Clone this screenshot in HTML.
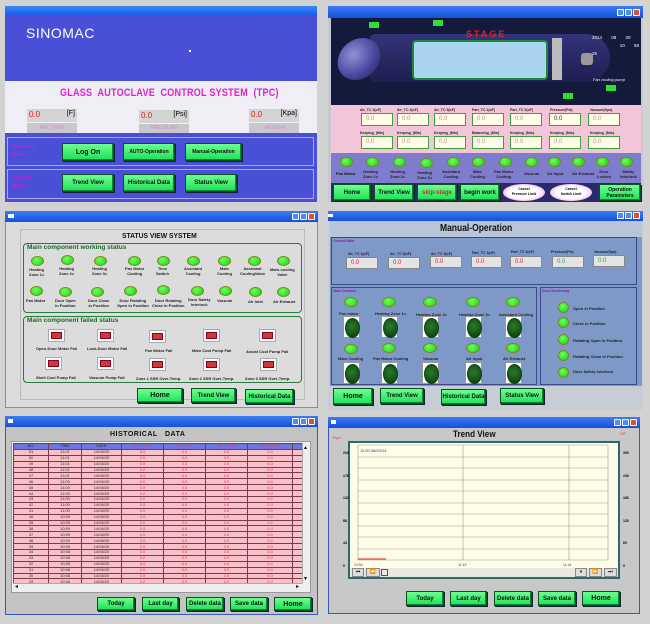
<!DOCTYPE html>
<html><head><meta charset="utf-8"><style>
*{margin:0;padding:0;box-sizing:border-box}
body{width:650px;height:624px;background:#d2d2d2;position:relative;overflow:hidden;font-family:"Liberation Sans",sans-serif}
.a{position:absolute}
.tb{position:absolute;height:10px;background:linear-gradient(#3b7cf5,#1650d8)}
.wb{position:absolute;top:2px;width:7px;height:7px;border:1px solid #fff;border-radius:1px;background:#4b8cf5}
.wx{background:#e0502a}
.btn{position:absolute;background:linear-gradient(#6dff8e,#1ee05a);border:1px solid #0c5020;box-shadow:1px 1px 0 #123,inset -1px -1px 0 #0a8a30;color:#111;font-weight:bold;font-size:6px;text-align:center;display:flex;align-items:center;justify-content:center;line-height:1;white-space:nowrap}
.lamp{position:absolute;width:13px;height:10px;border-radius:50%;background:radial-gradient(circle at 40% 35%,#6dff5a,#18d018);border:1px solid #7a8a10}
.lbl{position:absolute;font-size:4px;font-weight:bold;color:#222;text-align:center;line-height:5px;white-space:nowrap}
.rs{position:absolute;width:17px;height:13px;background:#fff;border:1px solid #aaa}
.rs:after{content:"";position:absolute;left:2px;top:2px;right:2px;bottom:2px;background:#d03838;border:1px solid #802}
.vb{position:absolute;height:13px;border:1px solid #3aa03a;background:#fffde8;font-size:6px;color:#c88;padding:2px 4px}
.fl{position:absolute;font-size:3.5px;font-weight:bold;color:#223;white-space:nowrap}
.knob{position:absolute;width:17px;height:22px;background:#fff;border:1px solid #999}
.knob:after{content:"";position:absolute;left:1px;top:1px;width:13px;height:18px;border-radius:50%;background:radial-gradient(circle at 45% 40%,#2a7a2a,#0a3a0a);border:1px solid #041}
table{border-collapse:collapse}
td{border:1px solid #7a3a4a;height:5.9px;font-size:4px;line-height:4px;text-align:center;color:#333;padding:0}
td.r{color:#e03a5a}
</style></head><body>

<!-- PANEL 1 -->
<div class="a" style="left:5px;top:6px;width:312px;height:196px;background:#4a4fd8"></div>
<div class="a" style="left:5px;top:6px;width:312px;height:9px;background:linear-gradient(#3a8af8,#1a5ae8)"></div>
<div class="a" style="left:26px;top:25px;color:#fff;font-size:14px;letter-spacing:0.5px">SINOMAC</div>
<div class="a" style="left:189px;top:50px;width:2px;height:2px;background:#fff"></div>
<div class="a" style="left:5px;top:81px;width:312px;height:52px;background:#eeeef4"></div>
<div class="a" style="left:60px;top:87px;width:220px;color:#e020d0;font-size:11px;font-weight:bold;white-space:nowrap;transform:scaleX(.82);transform-origin:0 0;letter-spacing:.3px">GLASS&nbsp; AUTOCLAVE&nbsp; CONTROL SYSTEM&nbsp; (TPC)</div>
<div class="a" style="left:27px;top:109px;width:50px;height:13px;background:#d4d4d4"><span class="a" style="left:2px;top:1px;color:#e02020;font-size:8px">0.0</span><span class="a" style="right:2px;top:1px;font-size:7px">[F]</span></div>
<div class="a" style="left:27px;top:123px;width:50px;height:10px;background:#c8c8cc;color:#e080d0;font-size:5px;text-align:center;line-height:10px">AIR_TEMP</div>
<div class="a" style="left:139px;top:110px;width:50px;height:13px;background:#d4d4d4"><span class="a" style="left:2px;top:1px;color:#e02020;font-size:8px">0.0</span><span class="a" style="right:2px;top:1px;font-size:7px">[Psi]</span></div>
<div class="a" style="left:139px;top:124px;width:50px;height:9px;background:#c8c8cc;color:#e080d0;font-size:5px;text-align:center;line-height:9px">PRESSURE</div>
<div class="a" style="left:249px;top:109px;width:50px;height:13px;background:#d4d4d4"><span class="a" style="left:2px;top:1px;color:#e02020;font-size:8px">0.0</span><span class="a" style="right:2px;top:1px;font-size:7px">[Kpa]</span></div>
<div class="a" style="left:249px;top:123px;width:50px;height:10px;background:#c8c8cc;color:#e080d0;font-size:5px;text-align:center;line-height:10px">VACUUM</div>
<div class="a" style="left:7px;top:137px;width:307px;height:29px;border:1px solid #a8a8f0"></div>
<div class="a" style="left:7px;top:169px;width:307px;height:30px;border:1px solid #a8a8f0"></div>
<div class="a" style="left:12px;top:143px;color:#d020d0;font-size:5.5px;line-height:8px">Operation<br>Items</div>
<div class="a" style="left:12px;top:174px;color:#d020d0;font-size:5.5px;line-height:8px">Viewing<br>Items</div>
<div class="btn" style="left:62px;top:143px;width:52px;height:18px;font-size:7px">Log On</div>
<div class="btn" style="left:123px;top:143px;width:52px;height:18px;font-size:5px">AUTO-Operation</div>
<div class="btn" style="left:185px;top:143px;width:57px;height:18px;font-size:5px">Manual-Operation</div>
<div class="btn" style="left:62px;top:174px;width:52px;height:18px;font-size:6px">Trend View</div>
<div class="btn" style="left:123px;top:174px;width:52px;height:18px;font-size:6px">Historical Data</div>
<div class="btn" style="left:185px;top:174px;width:52px;height:18px;font-size:6px">Status View</div>

<!-- PANEL 2 -->
<div class="a" style="left:328px;top:6px;width:315px;height:196px;background:#c8c8d0"></div>
<div class="tb" style="left:328px;top:6px;width:315px;height:12px"></div>
<div class="wb" style="left:617px;top:9px"></div><div class="wb" style="left:625px;top:9px"></div><div class="wb wx" style="left:633px;top:9px"></div>
<div class="a" style="left:331px;top:18px;width:310px;height:87px;background:#141a3c"></div>
<div class="a" style="left:370px;top:34px;width:240px;height:48px;border-radius:6px 30px 30px 6px;background:linear-gradient(#34347a,#1e1e50)"></div>
<div class="a" style="left:338px;top:38px;width:42px;height:42px;border-radius:50%;background:radial-gradient(circle at 35% 40%,#9090d8,#4a4aa0 55%,#1e1e58);transform:skewX(-10deg)"></div>
<div class="a" style="left:412px;top:40px;width:136px;height:40px;background:#a8d4f0;border:2px solid #1a8a3a;border-radius:4px"></div>
<div class="a" style="left:552px;top:38px;width:10px;height:42px;background:#bbb"></div>
<div class="a" style="left:581px;top:53px;width:12px;height:12px;background:#999;border-radius:3px"></div>
<div class="a" style="left:466px;top:29px;color:#e02020;font-size:9px;font-weight:bold;letter-spacing:2px">STAGE</div>
<div class="a" style="left:369px;top:22px;width:10px;height:6px;background:#30e030"></div>
<div class="a" style="left:433px;top:20px;width:10px;height:6px;background:#30e030"></div>
<div class="a" style="left:606px;top:85px;width:10px;height:6px;background:#30e030"></div>
<div class="a" style="left:563px;top:93px;width:10px;height:6px;background:#30e030"></div>
<div class="a" style="left:592px;top:34px;color:#fff;font-size:4.5px;line-height:8px;word-spacing:8px">2014 08 20<br>&nbsp;&nbsp;&nbsp;10 58 26</div>
<div class="a" style="left:593px;top:77px;color:#fff;font-size:4px;font-style:italic">Fan cooling pump</div>
<div class="a" style="left:331px;top:105px;width:310px;height:48px;background:#f4c4d8"></div>
<div class="fl" style="left:360px;top:108px">Air_TC 1(oF)</div><div class="fl" style="left:397px;top:108px">Air_TC 2(oF)</div><div class="fl" style="left:434px;top:108px">Air_TC 3(oF)</div><div class="fl" style="left:472px;top:108px">Part_TC 1(oF)</div><div class="fl" style="left:510px;top:108px">Part_TC 2(oF)</div><div class="fl" style="left:550px;top:108px">Pressure(Psi)</div><div class="fl" style="left:590px;top:108px">Vacuum(Kpa)</div>
<div class="vb" style="left:361px;top:113px;width:32px">0.0</div><div class="vb" style="left:397px;top:113px;width:32px">0.0</div><div class="vb" style="left:434px;top:113px;width:32px">0.0</div><div class="vb" style="left:472px;top:113px;width:32px">0.0</div><div class="vb" style="left:510px;top:113px;width:32px">0.0</div><div class="vb" style="left:549px;top:113px;width:32px;color:#333">0.0</div><div class="vb" style="left:588px;top:113px;width:32px">0.0</div>
<div class="fl" style="left:360px;top:131px">Keeping_(Min)</div><div class="fl" style="left:397px;top:131px">Keeping_(Min)</div><div class="fl" style="left:434px;top:131px">Keeping_(Min)</div><div class="fl" style="left:472px;top:131px">Balancing_(Min)</div><div class="fl" style="left:510px;top:131px">Keeping_(Min)</div><div class="fl" style="left:550px;top:131px">Keeping_(Min)</div><div class="fl" style="left:590px;top:131px">Keeping_(Min)</div>
<div class="vb" style="left:361px;top:136px;width:32px">0.0</div><div class="vb" style="left:397px;top:136px;width:32px">0.0</div><div class="vb" style="left:434px;top:136px;width:32px">0.0</div><div class="vb" style="left:472px;top:136px;width:32px">0.0</div><div class="vb" style="left:510px;top:136px;width:32px">0.0</div><div class="vb" style="left:549px;top:136px;width:32px">0.0</div><div class="vb" style="left:588px;top:136px;width:32px">0.0</div>
<div class="a" style="left:331px;top:153px;width:310px;height:30px;background:#7e7ccc"></div>
<div class="lamp" style="left:340px;top:157px"></div><div class="lamp" style="left:366px;top:157px"></div><div class="lamp" style="left:393px;top:157px"></div><div class="lamp" style="left:420px;top:158px"></div><div class="lamp" style="left:447px;top:157px"></div><div class="lamp" style="left:472px;top:157px"></div><div class="lamp" style="left:499px;top:157px"></div><div class="lamp" style="left:525px;top:157px"></div><div class="lamp" style="left:548px;top:157px"></div><div class="lamp" style="left:572px;top:157px"></div><div class="lamp" style="left:596px;top:157px"></div><div class="lamp" style="left:620px;top:157px"></div>
<div class="lbl" style="left:336px;top:171px;color:#111">Fan Motor</div><div class="lbl" style="left:363px;top:169px">Heating<br>Zone 1=</div><div class="lbl" style="left:390px;top:169px">Heating<br>Zone 2=</div><div class="lbl" style="left:417px;top:170px">Heating<br>Zone 3=</div><div class="lbl" style="left:442px;top:169px">Assistant<br>Cooling</div><div class="lbl" style="left:470px;top:169px">Main<br>Cooling</div><div class="lbl" style="left:494px;top:169px">Fan Motor<br>Cooling</div><div class="lbl" style="left:524px;top:171px">Vacuum</div><div class="lbl" style="left:547px;top:171px">Air Input</div><div class="lbl" style="left:572px;top:171px">Air Exhaust</div><div class="lbl" style="left:597px;top:169px">Door<br>Locked</div><div class="lbl" style="left:620px;top:169px">Safety<br>Interlock</div>
<div class="a" style="left:331px;top:183px;width:310px;height:19px;background:#2a2a6a"></div>
<div class="btn" style="left:333px;top:184px;width:38px;height:17px">Home</div>
<div class="btn" style="left:374px;top:184px;width:40px;height:17px">Trend View</div>
<div class="btn" style="left:417px;top:184px;width:40px;height:17px;color:#e02020">skip-stage</div>
<div class="btn" style="left:460px;top:184px;width:40px;height:17px">begin work</div>
<div class="a" style="left:503px;top:184px;width:42px;height:17px;border-radius:50%;background:radial-gradient(#fff 50%,#e070e0);font-size:3.5px;font-weight:bold;text-align:center;line-height:5px;padding-top:3px">Cancel<br>Pressure Limit</div>
<div class="a" style="left:550px;top:184px;width:42px;height:17px;border-radius:50%;background:radial-gradient(#fff 50%,#e070e0);font-size:3.5px;font-weight:bold;text-align:center;line-height:5px;padding-top:3px">Cancel<br>Switch Limit</div>
<div class="btn" style="left:599px;top:184px;width:42px;height:17px;font-size:5px;line-height:6px;white-space:normal">Operation<br>Parameters</div>

<!-- PANEL 3 -->
<div class="a" style="left:5px;top:212px;width:313px;height:196px;background:#dcdcdc;border:1px solid #8a8ab0"></div>
<div class="tb" style="left:5px;top:211px;width:313px;height:11px"></div>
<div class="a" style="left:8px;top:214px;width:6px;height:4px;background:#fff"></div>
<div class="wb" style="left:292px;top:213px"></div><div class="wb" style="left:300px;top:213px"></div><div class="wb wx" style="left:308px;top:213px"></div>
<div class="a" style="left:20px;top:229px;width:285px;height:171px;border:1px solid #bbb"></div>
<div class="a" style="left:122px;top:231px;font-size:7.5px;font-weight:bold;color:#111;transform:scaleX(.9);transform-origin:0 0">STATUS VIEW SYSTEM</div>
<div class="a" style="left:23px;top:243px;width:279px;height:70px;border:1.5px solid #2a7a3a;border-radius:4px"></div>
<div class="a" style="left:27px;top:244px;font-size:6.5px;font-weight:bold;color:#1a6a2a">Main component working status</div>
<div class="lamp" style="left:31px;top:256px"></div><div class="lamp" style="left:61px;top:255px"></div><div class="lamp" style="left:94px;top:256px"></div><div class="lamp" style="left:128px;top:256px"></div><div class="lamp" style="left:157px;top:256px"></div><div class="lamp" style="left:187px;top:256px"></div><div class="lamp" style="left:218px;top:256px"></div><div class="lamp" style="left:248px;top:256px"></div><div class="lamp" style="left:277px;top:256px"></div>
<div class="lbl" style="left:29px;top:267px">Heating<br>Zone 1=</div><div class="lbl" style="left:59px;top:266px">Heating<br>Zone 2=</div><div class="lbl" style="left:92px;top:266px">Heating<br>Zone 3=</div><div class="lbl" style="left:125px;top:266px">Fan Motor<br>Cooling</div><div class="lbl" style="left:156px;top:266px">Time<br>Switch</div><div class="lbl" style="left:184px;top:266px">Assistant<br>Cooling</div><div class="lbl" style="left:217px;top:266px">Main<br>Cooling</div><div class="lbl" style="left:240px;top:266px">Assistant<br>CoolingValve</div><div class="lbl" style="left:270px;top:267px">Main-cooling<br>Valve</div>
<div class="lamp" style="left:30px;top:286px"></div><div class="lamp" style="left:59px;top:287px"></div><div class="lamp" style="left:91px;top:287px"></div><div class="lamp" style="left:124px;top:286px"></div><div class="lamp" style="left:157px;top:285px"></div><div class="lamp" style="left:191px;top:286px"></div><div class="lamp" style="left:219px;top:286px"></div><div class="lamp" style="left:249px;top:287px"></div><div class="lamp" style="left:277px;top:287px"></div>
<div class="lbl" style="left:26px;top:298px">Fan Motor</div><div class="lbl" style="left:55px;top:298px">Door Open<br>in Position</div><div class="lbl" style="left:88px;top:298px">Door Close<br>in Position</div><div class="lbl" style="left:117px;top:298px">Door Rotating<br>Open in Position</div><div class="lbl" style="left:152px;top:298px">Door Rotating<br>Close in Position</div><div class="lbl" style="left:188px;top:297px">Door Safety<br>Interlock</div><div class="lbl" style="left:217px;top:298px">Vacuum</div><div class="lbl" style="left:248px;top:299px">Air Inlet</div><div class="lbl" style="left:273px;top:299px">Air Exhaust</div>
<div class="a" style="left:23px;top:316px;width:279px;height:67px;border:1.5px solid #2a7a3a;border-radius:4px"></div>
<div class="a" style="left:27px;top:317px;font-size:6.5px;font-weight:bold;color:#1a6a2a">Main component failed status</div>
<div class="rs" style="left:48px;top:329px"></div><div class="rs" style="left:97px;top:329px"></div><div class="rs" style="left:149px;top:330px"></div><div class="rs" style="left:203px;top:329px"></div><div class="rs" style="left:259px;top:329px"></div>
<div class="lbl" style="left:36px;top:346px">Open-Door Motor Fail</div><div class="lbl" style="left:87px;top:346px">Lock-Door Motor Fail</div><div class="lbl" style="left:145px;top:348px">Fan Motor Fail</div><div class="lbl" style="left:192px;top:348px">Main Cool Pump Fail</div><div class="lbl" style="left:246px;top:349px">Assist Cool Pump Fail</div>
<div class="rs" style="left:45px;top:357px"></div><div class="rs" style="left:97px;top:357px"></div><div class="rs" style="left:149px;top:358px"></div><div class="rs" style="left:203px;top:358px"></div><div class="rs" style="left:260px;top:358px"></div>
<div class="lbl" style="left:36px;top:375px">Shell Cool Pump Fail</div><div class="lbl" style="left:89px;top:375px">Vacuum Pump Fail</div><div class="lbl" style="left:136px;top:376px">Zone 1 SSR Over-Temp.</div><div class="lbl" style="left:189px;top:376px">Zone 2 SSR Over-Temp.</div><div class="lbl" style="left:245px;top:376px">Zone 3 SSR Over-Temp.</div>
<div class="btn" style="left:137px;top:388px;width:46px;height:15px;font-size:7px">Home</div>
<div class="btn" style="left:191px;top:388px;width:45px;height:15px">Trend View</div>
<div class="btn" style="left:245px;top:389px;width:49px;height:15px">Historical Data</div>

<!-- PANEL 4 -->
<div class="a" style="left:328px;top:211px;width:315px;height:199px;background:#c8ccd4"></div>
<div class="tb" style="left:328px;top:211px;width:315px;height:10px"></div>
<div class="a" style="left:328px;top:214px;width:5px;height:3px;background:#fff"></div>
<div class="wb" style="left:617px;top:212px"></div><div class="wb" style="left:625px;top:212px"></div><div class="wb wx" style="left:633px;top:212px"></div>
<div class="a" style="left:330px;top:221px;width:312px;height:185px;background:#7e98c8"></div>
<div class="a" style="left:330px;top:221px;width:312px;height:16px;background:#b8c4d8"></div>
<div class="a" style="left:440px;top:223px;font-size:10px;font-weight:bold;color:#111;transform:scaleX(.85);transform-origin:0 0;white-space:nowrap">Manual-Operation</div>
<div class="a" style="left:331px;top:237px;width:306px;height:48px;border:1px solid #3a4a8a;background:#7e98c8"></div>
<div class="a" style="left:333px;top:239px;font-size:3.5px;font-weight:bold;color:#a010a0">Current Data</div>
<div class="fl" style="left:348px;top:252px">Air_TC 1(oF)</div><div class="fl" style="left:390px;top:252px">Air_TC 2(oF)</div><div class="fl" style="left:431px;top:252px">Air_TC 3(oF)</div><div class="fl" style="left:472px;top:251px">Part_TC 1(oF)</div><div class="fl" style="left:511px;top:250px">Part_TC 2(oF)</div><div class="fl" style="left:551px;top:250px">Pressure(Psi)</div><div class="fl" style="left:594px;top:250px">Vacuum(Kpa)</div>
<div class="a" style="left:346px;top:257px;width:32px;height:12px;background:#e4e4e4;border:1px solid #888;color:#e02020;font-size:6px;padding:2px 4px">0.0</div>
<div class="a" style="left:388px;top:257px;width:32px;height:12px;background:#e4e4e4;border:1px solid #888;color:#e02020;font-size:6px;padding:2px 4px">0.0</div>
<div class="a" style="left:430px;top:256px;width:32px;height:12px;background:#e4e4e4;border:1px solid #888;color:#e02020;font-size:6px;padding:2px 4px">0.0</div>
<div class="a" style="left:471px;top:256px;width:31px;height:12px;background:#e4e4e4;border:1px solid #888;color:#e02020;font-size:6px;padding:2px 4px">0.0</div>
<div class="a" style="left:510px;top:256px;width:32px;height:12px;background:#e4e4e4;border:1px solid #888;color:#e02020;font-size:6px;padding:2px 4px">0.0</div>
<div class="a" style="left:552px;top:256px;width:32px;height:12px;background:#e4e4e4;border:1px solid #888;color:#3a9a6a;font-size:6px;padding:2px 4px">0.0</div>
<div class="a" style="left:593px;top:255px;width:32px;height:12px;background:#e4e4e4;border:1px solid #888;color:#3a9a6a;font-size:6px;padding:2px 4px">0.0</div>
<div class="a" style="left:331px;top:287px;width:206px;height:98px;border:1px solid #3a4a8a"></div>
<div class="a" style="left:540px;top:287px;width:97px;height:98px;border:1px solid #3a4a8a"></div>
<div class="a" style="left:333px;top:289px;font-size:3.5px;font-weight:bold;color:#a010a0">Main Controls</div>
<div class="a" style="left:542px;top:289px;font-size:3.5px;font-weight:bold;color:#a010a0">Door Monitoring</div>
<div class="lamp" style="left:344px;top:297px;width:14px"></div><div class="lamp" style="left:382px;top:297px;width:14px"></div><div class="lamp" style="left:423px;top:297px;width:14px"></div><div class="lamp" style="left:466px;top:297px;width:14px"></div><div class="lamp" style="left:506px;top:297px;width:14px"></div>
<div class="lbl" style="left:339px;top:311px">Fan motor</div><div class="lbl" style="left:375px;top:311px">Heating Zone 1=</div><div class="lbl" style="left:416px;top:312px">Heating Zone 2=</div><div class="lbl" style="left:459px;top:312px">Heating Zone 3=</div><div class="lbl" style="left:499px;top:312px">Assistant Cooling</div>
<div class="knob" style="left:343px;top:316px"></div><div class="knob" style="left:381px;top:316px"></div><div class="knob" style="left:422px;top:316px"></div><div class="knob" style="left:465px;top:316px"></div><div class="knob" style="left:505px;top:316px"></div>
<div class="lamp" style="left:344px;top:344px;width:14px"></div><div class="lamp" style="left:382px;top:343px;width:14px"></div><div class="lamp" style="left:423px;top:343px;width:14px"></div><div class="lamp" style="left:466px;top:343px;width:14px"></div><div class="lamp" style="left:506px;top:343px;width:14px"></div>
<div class="lbl" style="left:338px;top:356px">Main Cooling</div><div class="lbl" style="left:373px;top:356px">Fan Motor Cooling</div><div class="lbl" style="left:423px;top:356px">Vacuum</div><div class="lbl" style="left:466px;top:356px">Air Input</div><div class="lbl" style="left:503px;top:356px">Air Exhaust</div>
<div class="knob" style="left:343px;top:362px"></div><div class="knob" style="left:381px;top:362px"></div><div class="knob" style="left:422px;top:362px"></div><div class="knob" style="left:465px;top:362px"></div><div class="knob" style="left:505px;top:362px"></div>
<div class="lamp" style="left:558px;top:302px;width:11px;height:11px"></div><div class="lamp" style="left:558px;top:317px;width:11px;height:11px"></div><div class="lamp" style="left:558px;top:334px;width:11px;height:11px"></div><div class="lamp" style="left:558px;top:350px;width:11px;height:11px"></div><div class="lamp" style="left:558px;top:367px;width:11px;height:11px"></div>
<div class="lbl" style="left:573px;top:306px">Open in Position</div><div class="lbl" style="left:573px;top:321px">Close in Position</div><div class="lbl" style="left:573px;top:338px">Rotating Open in Position</div><div class="lbl" style="left:573px;top:354px">Rotating Close in Position</div><div class="lbl" style="left:573px;top:369px">Door Safety Interlock</div>
<div class="a" style="left:330px;top:386px;width:312px;height:20px;background:#c8ccd4"></div>
<div class="btn" style="left:333px;top:388px;width:40px;height:17px;font-size:7px">Home</div>
<div class="btn" style="left:380px;top:388px;width:44px;height:16px">Trend View</div>
<div class="btn" style="left:441px;top:389px;width:45px;height:16px">Historical Data</div>
<div class="btn" style="left:500px;top:388px;width:44px;height:16px">Status View</div>

<!-- PANEL 5 -->
<div class="a" style="left:5px;top:417px;width:313px;height:198px;background:#c4c4c4;border:1px solid #3a5ab8"></div>
<div class="tb" style="left:5px;top:416px;width:313px;height:11px"></div>
<div class="a" style="left:8px;top:419px;width:5px;height:4px;background:#fff"></div>
<div class="wb" style="left:292px;top:418px"></div><div class="wb" style="left:300px;top:418px"></div><div class="wb wx" style="left:308px;top:418px"></div>
<div class="a" style="left:110px;top:431px;font-size:7px;font-weight:bold;color:#111;letter-spacing:.5px">HISTORICAL&nbsp;&nbsp; DATA</div>
<div class="a" style="left:11px;top:441px;width:300px;height:152px;background:#f0f0f0;border:1px solid #999"></div>
<div class="a" style="left:13px;top:443px;width:289px;height:140px;overflow:hidden;background:#f8c0c8">
<table style="width:305px">
<tr style="background:#6c78e0"><td style="width:35px;color:#223">NO.</td><td style="width:33px;color:#223">TIME</td><td style="width:40px;color:#223">DATE</td><td class="r" style="width:42px">Air_TC 1F</td><td class="r" style="width:42px">Air_TC 2F</td><td class="r" style="width:42px">Air_TC 3F</td><td class="r" style="width:45px">Part_TC 1F</td><td class="r">PR</td></tr>
<tr><td>51</td><td>11:01</td><td>14/08/20</td><td class="r">0.0</td><td class="r">0.0</td><td class="r">0.0</td><td class="r">0.0</td><td class="r">0.0</td></tr>
<tr><td>50</td><td>11:01</td><td>14/08/20</td><td class="r">0.0</td><td class="r">0.0</td><td class="r">0.0</td><td class="r">0.0</td><td class="r">0.0</td></tr>
<tr><td>49</td><td>11:01</td><td>14/08/20</td><td class="r">0.0</td><td class="r">0.0</td><td class="r">0.0</td><td class="r">0.0</td><td class="r">0.0</td></tr>
<tr><td>48</td><td>11:01</td><td>14/08/20</td><td class="r">0.0</td><td class="r">0.0</td><td class="r">0.0</td><td class="r">0.0</td><td class="r">0.0</td></tr>
<tr><td>47</td><td>11:01</td><td>14/08/20</td><td class="r">0.0</td><td class="r">0.0</td><td class="r">0.0</td><td class="r">0.0</td><td class="r">0.0</td></tr>
<tr><td>46</td><td>11:00</td><td>14/08/20</td><td class="r">0.0</td><td class="r">0.0</td><td class="r">0.0</td><td class="r">0.0</td><td class="r">0.0</td></tr>
<tr><td>45</td><td>11:00</td><td>14/08/20</td><td class="r">0.0</td><td class="r">0.0</td><td class="r">0.0</td><td class="r">0.0</td><td class="r">0.0</td></tr>
<tr><td>44</td><td>11:00</td><td>14/08/20</td><td class="r">0.0</td><td class="r">0.0</td><td class="r">0.0</td><td class="r">0.0</td><td class="r">0.0</td></tr>
<tr><td>43</td><td>11:00</td><td>14/08/20</td><td class="r">0.0</td><td class="r">0.0</td><td class="r">0.0</td><td class="r">0.0</td><td class="r">0.0</td></tr>
<tr><td>42</td><td>11:00</td><td>14/08/20</td><td class="r">0.0</td><td class="r">0.0</td><td class="r">0.0</td><td class="r">0.0</td><td class="r">0.0</td></tr>
<tr><td>41</td><td>11:00</td><td>14/08/20</td><td class="r">0.0</td><td class="r">0.0</td><td class="r">0.0</td><td class="r">0.0</td><td class="r">0.0</td></tr>
<tr><td>40</td><td>10:59</td><td>14/08/20</td><td class="r">0.0</td><td class="r">0.0</td><td class="r">0.0</td><td class="r">0.0</td><td class="r">0.0</td></tr>
<tr><td>39</td><td>10:59</td><td>14/08/20</td><td class="r">0.0</td><td class="r">0.0</td><td class="r">0.0</td><td class="r">0.0</td><td class="r">0.0</td></tr>
<tr><td>38</td><td>10:59</td><td>14/08/20</td><td class="r">0.0</td><td class="r">0.0</td><td class="r">0.0</td><td class="r">0.0</td><td class="r">0.0</td></tr>
<tr><td>37</td><td>10:59</td><td>14/08/20</td><td class="r">0.0</td><td class="r">0.0</td><td class="r">0.0</td><td class="r">0.0</td><td class="r">0.0</td></tr>
<tr><td>36</td><td>10:59</td><td>14/08/20</td><td class="r">0.0</td><td class="r">0.0</td><td class="r">0.0</td><td class="r">0.0</td><td class="r">0.0</td></tr>
<tr><td>35</td><td>10:59</td><td>14/08/20</td><td class="r">0.0</td><td class="r">0.0</td><td class="r">0.0</td><td class="r">0.0</td><td class="r">0.0</td></tr>
<tr><td>34</td><td>10:58</td><td>14/08/20</td><td class="r">0.0</td><td class="r">0.0</td><td class="r">0.0</td><td class="r">0.0</td><td class="r">0.0</td></tr>
<tr><td>33</td><td>10:58</td><td>14/08/20</td><td class="r">0.0</td><td class="r">0.0</td><td class="r">0.0</td><td class="r">0.0</td><td class="r">0.0</td></tr>
<tr><td>32</td><td>10:58</td><td>14/08/20</td><td class="r">0.0</td><td class="r">0.0</td><td class="r">0.0</td><td class="r">0.0</td><td class="r">0.0</td></tr>
<tr><td>31</td><td>10:58</td><td>14/08/20</td><td class="r">0.0</td><td class="r">0.0</td><td class="r">0.0</td><td class="r">0.0</td><td class="r">0.0</td></tr>
<tr><td>30</td><td>10:58</td><td>14/08/20</td><td class="r">0.0</td><td class="r">0.0</td><td class="r">0.0</td><td class="r">0.0</td><td class="r">0.0</td></tr>
<tr><td>29</td><td>10:58</td><td>14/08/20</td><td class="r">0.0</td><td class="r">0.0</td><td class="r">0.0</td><td class="r">0.0</td><td class="r">0.0</td></tr>
</table></div>
<div class="a" style="left:302px;top:443px;width:8px;height:140px;background:#eee;border-left:1px solid #aaa"></div>
<div class="a" style="left:303px;top:445px;font-size:5px">▲</div><div class="a" style="left:303px;top:576px;font-size:5px">▼</div>
<div class="a" style="left:13px;top:583px;width:289px;height:8px;background:#eee;border-top:1px solid #aaa"></div>
<div class="a" style="left:15px;top:583px;font-size:6px">◂</div><div class="a" style="left:296px;top:583px;font-size:6px">▸</div>
<div class="btn" style="left:97px;top:597px;width:38px;height:14px">Today</div>
<div class="btn" style="left:142px;top:597px;width:37px;height:14px">Last day</div>
<div class="btn" style="left:186px;top:597px;width:38px;height:14px">Delete data</div>
<div class="btn" style="left:230px;top:597px;width:38px;height:14px">Save data</div>
<div class="btn" style="left:274px;top:597px;width:38px;height:14px;font-size:7px">Home</div>

<!-- PANEL 6 -->
<div class="a" style="left:328px;top:417px;width:312px;height:197px;background:#c8c8c8;border:1px solid #3a5ab8"></div>
<div class="tb" style="left:328px;top:417px;width:312px;height:11px"></div>
<div class="a" style="left:331px;top:420px;width:5px;height:4px;background:#fff"></div>
<div class="wb" style="left:614px;top:419px"></div><div class="wb" style="left:622px;top:419px"></div><div class="wb wx" style="left:630px;top:419px"></div>
<div class="a" style="left:453px;top:429px;font-size:9px;font-weight:bold;color:#111;transform:scaleX(.9);transform-origin:0 0;white-space:nowrap">Trend View</div>
<div class="a" style="left:333px;top:436px;font-size:3.5px;color:#e03030">F/psi</div>
<div class="a" style="left:620px;top:432px;font-size:3.5px;color:#e03030">C/F</div>
<div class="a" style="left:348px;top:441px;width:272px;height:138px;border:2px solid #2a6a6a;background:#fffde8"></div>
<svg class="a" style="left:350px;top:443px" width="268" height="134">
<g stroke="#999" stroke-width=".6">
<line x1="8" y1="2" x2="258" y2="2"/><line x1="8" y1="14" x2="258" y2="14"/><line x1="8" y1="25" x2="258" y2="25"/><line x1="8" y1="37" x2="258" y2="37"/><line x1="8" y1="48" x2="258" y2="48"/><line x1="8" y1="60" x2="258" y2="60"/><line x1="8" y1="71" x2="258" y2="71"/><line x1="8" y1="83" x2="258" y2="83"/><line x1="8" y1="94" x2="258" y2="94"/><line x1="8" y1="106" x2="258" y2="106"/><line x1="8" y1="117" x2="258" y2="117"/>
<line x1="8" y1="2" x2="8" y2="117"/><line x1="113" y1="2" x2="113" y2="117"/><line x1="219" y1="2" x2="219" y2="117"/><line x1="258" y1="2" x2="258" y2="117"/>
</g>
<line x1="8" y1="116" x2="36" y2="116" stroke="#e02020" stroke-width="1"/>
<text x="10" y="9" font-size="4" fill="#2a2ab8" font-family="Liberation Sans">11:00 08/20/14</text>
<text x="4" y="123" font-size="3.5" fill="#444" font-family="Liberation Sans">10:54</text>
<text x="108" y="123" font-size="3.5" fill="#444" font-family="Liberation Sans">11:19</text>
<text x="213" y="123" font-size="3.5" fill="#444" font-family="Liberation Sans">11:44</text>
<rect x="0" y="125" width="268" height="9" fill="#e8e8e0"/>
</svg>
<div class="a" style="left:352px;top:568px;width:12px;height:9px;background:#ddd;border:1px solid #888;font-size:5px;text-align:center">⏮</div>
<div class="a" style="left:366px;top:568px;width:14px;height:9px;background:#ddd;border:1px solid #888;font-size:5px;text-align:center">⏪</div>
<div class="a" style="left:381px;top:569px;width:7px;height:7px;border:1px solid #555"></div>
<div class="a" style="left:575px;top:568px;width:12px;height:9px;background:#ddd;border:1px solid #888;font-size:5px;text-align:center">⏸</div>
<div class="a" style="left:589px;top:568px;width:13px;height:9px;background:#ddd;border:1px solid #888;font-size:5px;text-align:center">⏩</div>
<div class="a" style="left:604px;top:568px;width:13px;height:9px;background:#ddd;border:1px solid #888;font-size:5px;text-align:center">⏭</div>
<div class="a" style="left:343px;top:442px;font-size:3.5px;font-weight:bold;line-height:22.6px">220<br>176<br>132<br>88<br>44<br>0</div>
<div class="a" style="left:623px;top:442px;font-size:3.5px;font-weight:bold;line-height:22.6px">300<br>240<br>180<br>120<br>60<br>0</div>
<div class="btn" style="left:406px;top:591px;width:38px;height:15px">Today</div>
<div class="btn" style="left:450px;top:591px;width:37px;height:15px">Last day</div>
<div class="btn" style="left:494px;top:591px;width:38px;height:15px">Delete data</div>
<div class="btn" style="left:538px;top:591px;width:38px;height:15px">Save data</div>
<div class="btn" style="left:582px;top:591px;width:38px;height:15px;font-size:7px">Home</div>
</body></html>
